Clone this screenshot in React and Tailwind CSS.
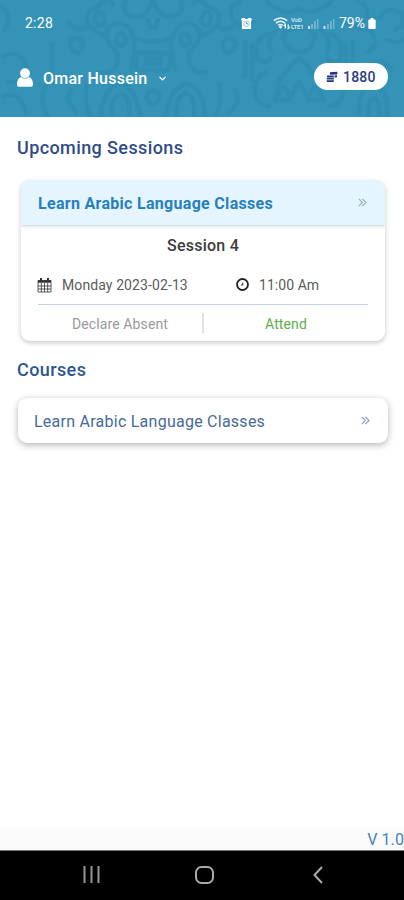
// one half of the face motif, drawn right of its centre line
const FACE = [
    'M0 1 Q10 24 26 14 Q34 4 22 -6 M5 20 L3 27 H-3 M0 41 Q10 43 17 38 M0 53 H14 Q17 53 17 57 V66 Q17 70 12 70 H0',
    'M0 58 H7 V64 H0 M22 70 Q14 42 24 28 Q34 18 45 28 Q50 38 40 48 Q33 54 37 66 Q44 76 54 72',
    'M28 38 Q30 30 36 36 Q39 44 32 46 Q27 45 28 38',
    'M40 4 Q46 -4 54 6 Q68 10 66 22 Q58 34 47 36 M50 14 Q58 8 58 20 Q54 30 48 22 Z',
    'M64 26 Q74 34 84 22 M70 42 Q78 34 83 42 Q84 52 74 53 Q68 48 70 42',
    'M12 118 Q18 84 34 84 Q51 88 52 118 M24 118 Q22 96 32 94 Q43 96 41 118',
    'M0 91 Q8 92 6 99 Q4 104 0 104 M62 118 Q70 102 66 84 M76 112 Q90 102 82 90',
];

// half of the mask motif, mirrored the same way
const MASK = [
    'M0 28 Q14 26 16 38 Q12 52 0 52 M-1 8 Q12 16 22 8 Q34 4 32 -4 M22 30 Q34 40 28 52',
    'M0 58 Q10 66 16 76 Q24 84 20 94 M28 34 Q40 34 42 46 V58 Q34 66 28 58',
    'M10 100 Q10 88 17 87 Q24 92 24 100 Z M0 82 L10 100 M54 42 V76 M47 46 V80',
    'M46 22 Q62 32 68 16 Q70 4 58 2 M34 72 Q46 80 44 94 Q40 106 30 106',
    'M62 30 Q74 28 76 40 Q76 52 66 52 M66 66 Q84 56 92 70 M60 112 Q60 86 74 84 Q90 88 88 116 M70 116 Q68 98 76 98 Q82 102 80 116',
    'M80 18 Q90 4 102 14 Q108 26 96 30 M88 40 Q100 46 108 36',
];

function Pattern() {
    return (
        <svg className="absolute inset-0 h-full w-full" viewBox="0 0 404 117" fill="none" stroke="#1f7a9f" strokeWidth="4.5" strokeLinecap="round" opacity=".19">
            <g transform="translate(153 0)">{FACE.map((d) => <path key={d} d={d} />)}</g>
            <g transform="translate(153 0) scale(-1 1)">{FACE.map((d) => <path key={d} d={d} />)}</g>
            <g transform="translate(299 0)">{MASK.map((d) => <path key={d} d={d} />)}</g>
            <g transform="translate(299 0) scale(-1 1)">{MASK.slice(0, 4).map((d) => <path key={d} d={d} />)}</g>
            <path d="M52 44V78M2 6Q14 18 4 30M4 56Q22 48 26 66T8 82M4 96Q20 90 26 112M46 84Q38 100 48 117" />
        </svg>
    )
}

function AlarmIcon() {
    return (
        <svg className="h-[11px] w-[11px]" viewBox="0 0 12 12">
            <path d="M1 0h3l1 1h2l1-1h3l1 2-1 1v9H1V3L0 2Z" fill="#fff" />
            <circle cx="6" cy="6.2" r="3" fill="none" stroke="#6db4ce" strokeWidth=".8" />
            <path d="M6 4.4v2h1.6" fill="none" stroke="#3390b5" strokeWidth="1" />
        </svg>
    )
}

function WifiIcon() {
    return (
        <svg className="h-[14px] w-[18px]" viewBox="0 0 18 14" fill="none" stroke="#fff">
            <path d="M.8 4.6Q7.5-.8 14.2 4.6M3 7.1Q7.5 3.4 12 7.1M5.2 9.3Q7.5 7.6 9.8 9.3" strokeWidth="1.5" opacity=".9" />
            <path d="M7.5 9.4l1.8 1.6-1.8 1.8-1.8-1.8Z" fill="#fff" stroke="none" />
            <path d="M12.4 12.5V8.4l-1.6 1.6M15.2 8.4v4.1l1.6-1.6" strokeWidth="1.1" />
        </svg>
    )
}

function SignalIcons() {
    return (
        <svg className="ml-[2px] h-[14px] w-[28px]" viewBox="34 0 28 14" fill="#fff">
            <path d="M35 10h2v3h-2zM50.5 10h2v3h-2z" opacity=".75" />
            <path d="M38 8h2v5h-2zM41 5h2v8h-2zM44 3h1.5v10H44zM54 8h2v5h-2zM57 5h2v8h-2zM60 3h1.5v10H60z" opacity=".3" />
        </svg>
    )
}

function CoinsIcon() {
    return (
        <svg className="h-[12px] w-[12px]" viewBox="0 0 12 12" fill="#24347d">
            <path d="M4 1.2L11.3.8v2.6L4 3.8ZM8.5 4.4l2.5-.2v2L8.5 6.6ZM1 4.6h6.8v1.8H1ZM.8 7h7v1.6h-7ZM.8 9.3h7v1.8h-7Z" />
        </svg>
    )
}

function Chevrons({className}) {
    return (
        <svg className={className} viewBox="0 0 9 9" fill="none" stroke="currentColor" strokeWidth="1.1">
            <path d="M.8.8l3.6 3.7L.8 8.2M4.4.8L8 4.5 4.4 8.2" />
        </svg>
    )
}

function Header() {
    return (
        <header className="relative h-[117px] shrink-0 overflow-hidden bg-[#3693b8] text-white">
            <Pattern />
            <div className="relative flex h-[46px] items-center pl-[25px] pr-[28px] text-[14px]">
                <span className="mt-px tracking-[0.25px]">2:28</span>
                <div className="ml-auto flex items-center">
                    <AlarmIcon />
                    <div className="ml-[21px] flex items-center">
                        <WifiIcon />
                        <div className="flex w-[14px] flex-col text-[6px] font-bold leading-[7px] tracking-[-0.1px] opacity-75">
                            <span>VoD</span>
                            <span>LTE1</span>
                        </div>
                        <SignalIcons />
                    </div>
                    <span className="ml-[4px] mt-px">79%</span>
                    <svg className="ml-[3px] mt-px h-[11px] w-[8px]" viewBox="0 0 8 12" fill="#fff">
                        <path d="M2.5 0h3v1.5H7q1 0 1 1V11q0 1-1 1H1q-1 0-1-1V2.500q0-1 1-1h1.500Z" />
                    </svg>
                </div>
            </div>
            <div className="relative mt-[17px] flex h-[27px] items-center pl-[17px] pr-4">
                <svg className="mt-[2px] h-[19px] w-[16px]" viewBox="0 0 16 19" fill="#fff">
                    <circle cx="8" cy="5.2" r="4.9" />
                    <path d="M4 9q4 3 8 0 4 1.500 4 7.500 0 2.300-2 2.300H2q-2 0-2-2.300 0-6 4-7.500Z" />
                </svg>
                <span className="ml-[10px] mt-[5px] text-[16px] font-medium tracking-[0.25px]">Omar Hussein</span>
                <svg className="ml-[11px] mt-[3px] h-[5px] w-[7px]" viewBox="0 0 7 5" fill="none" stroke="#fff" strokeWidth="1.2">
                    <path d="M.5.8l3 3 3-3" />
                </svg>
                <div className="ml-auto flex h-[27px] w-[74px] items-center gap-[5px] rounded-full bg-white pl-[12px] text-[#293d7c]">
                    <CoinsIcon />
                    <span className="mt-px text-[14px] font-medium tracking-[0.2px]">1880</span>
                </div>
            </div>
        </header>
    )
}

function SessionCard() {
    return (
        <div className="ml-[21px] mr-[19px] mt-[20px] h-[161px] overflow-hidden rounded-[9px] bg-white shadow-[0_2px_5px_rgba(0,0,0,0.22)]">
            <div className="flex h-[45px] items-center justify-between bg-[#e5f5fe] pl-[17px] pr-[18px] shadow-[0_1px_3px_rgba(60,90,120,0.3)]">
                <span className="mt-[2px] text-[16px] font-bold tracking-[0.3px] text-[#287fbd]">Learn Arabic Language Classes</span>
                <Chevrons className="h-[9px] w-[9px] text-[#93afc1]" />
            </div>
            <div className="mt-[10px] text-center text-[16px] font-medium leading-[22px] tracking-[0.25px] text-[#3c3c3c]">Session 4</div>
            <div className="mt-[18px] flex h-[20px] items-center pl-[16px] text-[14px] text-[#5b5b5b]">
                <svg className="-mt-px h-[16px] w-[15px]" viewBox="0 0 15 16" fill="none" stroke="#333">
                    <path d="M1 3.5h13v11.5H1zM1 9h13M1 12h13M4.3 6v9M7.5 6v9M10.7 6v9" strokeWidth=".8" />
                    <path d="M1 4.5h13" strokeWidth="2.5" />
                    <path d="M4 1v4M11 1v4" strokeWidth="2" />
                </svg>
                <span className="ml-[10px] w-[174px] tracking-[0.1px]">Monday 2023-02-13</span>
                <svg className="-mt-px h-[13px] w-[13px]" viewBox="0 0 13 13" fill="none" stroke="#222">
                    <circle cx="6.5" cy="6.5" r="5.5" strokeWidth="1.8" />
                    <path d="M6.8 4.6v2.4H5" strokeWidth="1" />
                </svg>
                <span className="ml-[10px] tracking-[0.05px]">11:00 Am</span>
            </div>
            <div className="ml-[17px] mr-[17px] mt-[9px] flex h-[37px] items-center border-t border-[#bfd2e6] text-[14px]">
                <span className="mt-[2px] w-[164px] text-center tracking-[0.12px] text-[#999]">Declare Absent</span>
                <span className="h-[20px] w-[2px] bg-[#dce3e9]" />
                <span className="mt-[2px] flex-1 text-center tracking-[0.1px] text-[#60ad4b]">Attend</span>
            </div>
        </div>
    )
}

function CourseCard() {
    return (
        <div className="ml-[18px] mr-[16px] mt-[16px] flex h-[45px] items-center justify-between rounded-[9px] bg-white pl-[16px] pr-[18px] shadow-[0_2px_7px_rgba(0,0,0,0.3)]">
            <span className="mt-[2px] text-[16px] tracking-[0.25px] text-[#486a98]">Learn Arabic Language Classes</span>
            <Chevrons className="h-[9px] w-[9px] text-[#7b9fbe]" />
        </div>
    )
}

function NavBar() {
    return (
        <nav className="flex h-[50px] shrink-0 items-center border-t border-[#777] bg-black pb-[2px] pl-[83px] pr-[81px]">
            <svg className="h-[18px] w-[17px]" viewBox="0 0 17 18" stroke="#969696" strokeWidth="2">
                <path d="M1.5 0v17M8.5 0v17M15.5 0v17" />
            </svg>
            <svg className="ml-[95px] h-[18px] w-[19px]" viewBox="0 0 19 18" fill="none" stroke="#aaa" strokeWidth="2">
                <rect x="1" y="1" width="17" height="16" rx="5.5" />
            </svg>
            <svg className="ml-auto h-[18px] w-[10px]" viewBox="0 0 10 18" fill="none" stroke="#aaa" strokeWidth="2">
                <path d="M9 1L1.5 9 9 17" />
            </svg>
        </nav>
    )
}

export default function App() {
    return (
        <div className="flex h-[900px] w-[404px] flex-col overflow-hidden bg-white font-[Roboto,sans-serif]">
            <Header />
            <main className="flex-1">
                <h2 className="ml-[17px] mt-[19px] text-[18px] font-medium leading-[24px] tracking-[0.4px] text-[#304b88]">Upcoming Sessions</h2>
                <SessionCard />
                <h2 className="ml-[17px] mt-[17px] text-[18px] font-medium leading-[24px] tracking-[0.4px] text-[#2d568f]">Courses</h2>
                <CourseCard />
            </main>
            <div className="flex h-[22px] shrink-0 items-center justify-end whitespace-nowrap bg-[#fafafa] pt-[2px] text-[16px] tracking-[0.1px] text-[#4385b5]">V 1.0</div>
            <NavBar />
        </div>
    )
}
